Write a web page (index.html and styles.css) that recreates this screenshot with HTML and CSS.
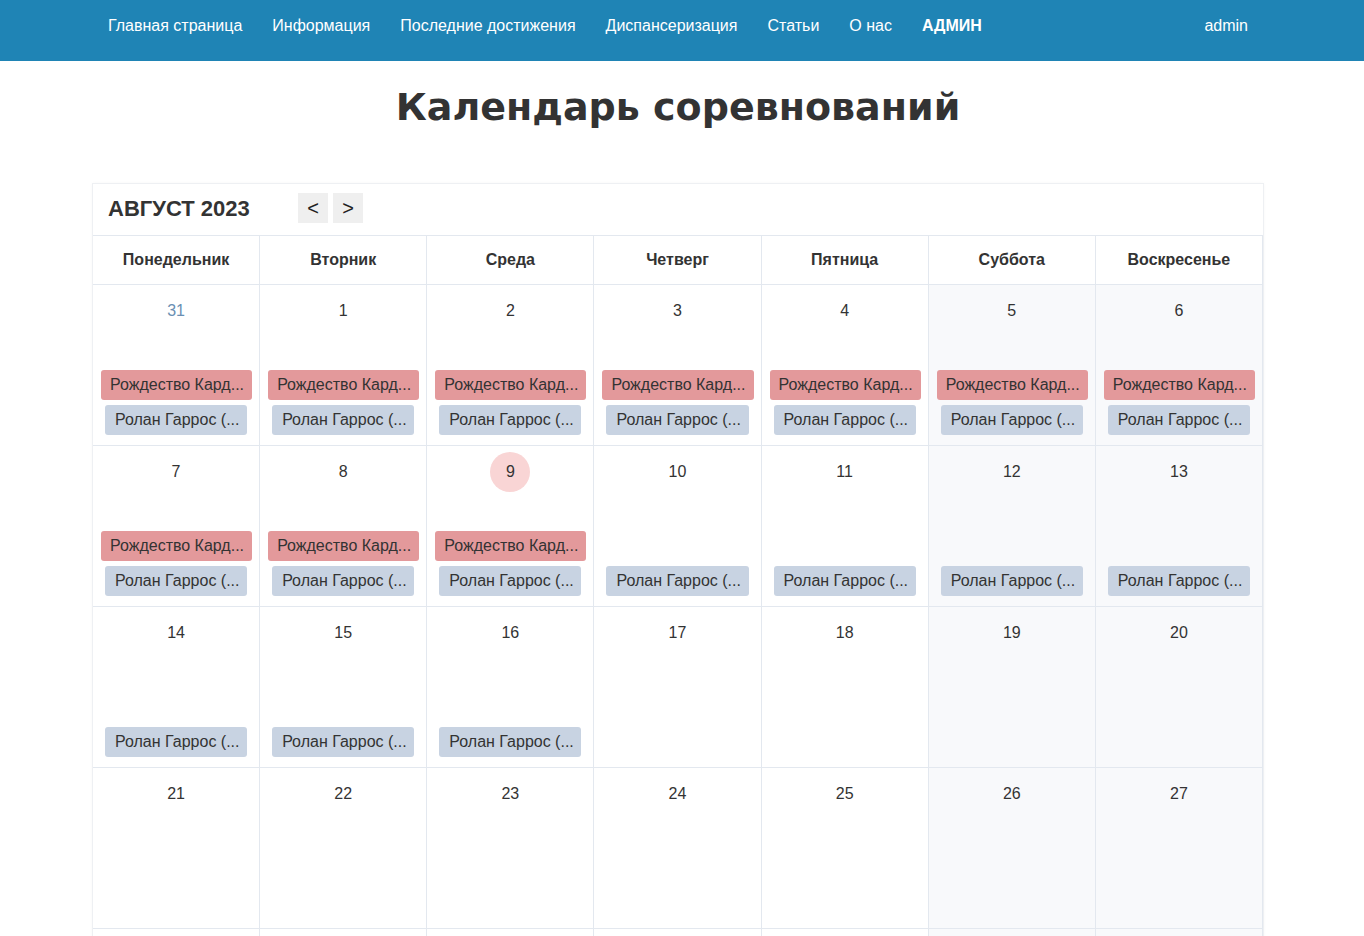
FILE: index.html
```html
<!DOCTYPE html>
<html lang="ru">
<head>
<meta charset="utf-8">
<title>Календарь соревнований</title>
<link rel="stylesheet" href="styles.css">
</head>
<body>
<nav class="navbar">
  <div class="nav-inner">
    <ul class="nav-links">
      <li><a href="#">Главная страница</a></li>
      <li><a href="#">Информация</a></li>
      <li><a href="#">Последние достижения</a></li>
      <li><a href="#">Диспансеризация</a></li>
      <li><a href="#">Статьи</a></li>
      <li><a href="#">О нас</a></li>
      <li><a href="#" class="strong">АДМИН</a></li>
    </ul>
    <a href="#" class="nav-user">admin</a>
  </div>
</nav>

<main class="page">
  <h1 class="title">Календарь соревнований</h1>

  <section class="calendar">
    <div class="cal-head">
      <h2 class="month">АВГУСТ 2023</h2>
      <div class="nav-btns">
        <button class="btn">&lt;</button>
        <button class="btn">&gt;</button>
      </div>
    </div>

    <div class="grid">
      <div class="wd">Понедельник</div>
      <div class="wd">Вторник</div>
      <div class="wd">Среда</div>
      <div class="wd">Четверг</div>
      <div class="wd">Пятница</div>
      <div class="wd">Суббота</div>
      <div class="wd">Воскресенье</div>

      <div class="day"><div class="num other">31</div><div class="ev red">Рождество Кард...</div><div class="ev gray">Ролан Гаррос (...</div></div>
      <div class="day"><div class="num">1</div><div class="ev red">Рождество Кард...</div><div class="ev gray">Ролан Гаррос (...</div></div>
      <div class="day"><div class="num">2</div><div class="ev red">Рождество Кард...</div><div class="ev gray">Ролан Гаррос (...</div></div>
      <div class="day"><div class="num">3</div><div class="ev red">Рождество Кард...</div><div class="ev gray">Ролан Гаррос (...</div></div>
      <div class="day"><div class="num">4</div><div class="ev red">Рождество Кард...</div><div class="ev gray">Ролан Гаррос (...</div></div>
      <div class="day weekend"><div class="num">5</div><div class="ev red">Рождество Кард...</div><div class="ev gray">Ролан Гаррос (...</div></div>
      <div class="day weekend"><div class="num">6</div><div class="ev red">Рождество Кард...</div><div class="ev gray">Ролан Гаррос (...</div></div>

      <div class="day"><div class="num">7</div><div class="ev red">Рождество Кард...</div><div class="ev gray">Ролан Гаррос (...</div></div>
      <div class="day"><div class="num">8</div><div class="ev red">Рождество Кард...</div><div class="ev gray">Ролан Гаррос (...</div></div>
      <div class="day"><div class="num"><span class="today">9</span></div><div class="ev red">Рождество Кард...</div><div class="ev gray">Ролан Гаррос (...</div></div>
      <div class="day"><div class="num">10</div><div class="ev gray">Ролан Гаррос (...</div></div>
      <div class="day"><div class="num">11</div><div class="ev gray">Ролан Гаррос (...</div></div>
      <div class="day weekend"><div class="num">12</div><div class="ev gray">Ролан Гаррос (...</div></div>
      <div class="day weekend"><div class="num">13</div><div class="ev gray">Ролан Гаррос (...</div></div>

      <div class="day"><div class="num">14</div><div class="ev gray">Ролан Гаррос (...</div></div>
      <div class="day"><div class="num">15</div><div class="ev gray">Ролан Гаррос (...</div></div>
      <div class="day"><div class="num">16</div><div class="ev gray">Ролан Гаррос (...</div></div>
      <div class="day"><div class="num">17</div></div>
      <div class="day"><div class="num">18</div></div>
      <div class="day weekend"><div class="num">19</div></div>
      <div class="day weekend"><div class="num">20</div></div>

      <div class="day"><div class="num">21</div></div>
      <div class="day"><div class="num">22</div></div>
      <div class="day"><div class="num">23</div></div>
      <div class="day"><div class="num">24</div></div>
      <div class="day"><div class="num">25</div></div>
      <div class="day weekend"><div class="num">26</div></div>
      <div class="day weekend"><div class="num">27</div></div>

      <div class="day"><div class="num">28</div></div>
      <div class="day"><div class="num">29</div></div>
      <div class="day"><div class="num">30</div></div>
      <div class="day"><div class="num">31</div></div>
      <div class="day"><div class="num other">1</div></div>
      <div class="day weekend"><div class="num other">2</div></div>
      <div class="day weekend"><div class="num other">3</div></div>
    </div>
  </section>
</main>
</body>
</html>
```

FILE: styles.css
```css
* { box-sizing: border-box; }

body {
  margin: 0;
  font-family: "Liberation Sans", Arial, sans-serif;
  font-size: 16px;
  color: #333;
  background: #fff;
}

.navbar {
  background: #1f84b5;
  height: 61px;
}

.nav-inner {
  width: 1170px;
  margin-left: 93px;
  display: flex;
  justify-content: space-between;
  align-items: flex-start;
}

.nav-links {
  list-style: none;
  margin: 0;
  padding: 0;
  display: flex;
}

.nav-links a,
.nav-user {
  display: block;
  padding: 16px 15px 14px;
  line-height: 20px;
  color: #fff;
  text-decoration: none;
  font-size: 16px;
}

.nav-links a.strong { font-weight: bold; }

.page {
  width: 1172px;
  margin-left: 92px;
  padding-bottom: 40px;
}

.title {
  margin: 23px 0 0;
  height: 99px;
  text-align: center;
  font-family: "DejaVu Sans", sans-serif;
  font-weight: bold;
  font-size: 38px;
  line-height: 46px;
  letter-spacing: 0;
  color: #333;
}

.calendar {
  border: 1px solid #eef0f3;
  border-bottom: none;
  box-shadow: 0 0 3px rgba(0, 0, 0, 0.03);
}

.cal-head {
  height: 52px;
  display: flex;
  align-items: center;
  padding-left: 15px;
  padding-bottom: 2px;
  border-bottom: 1px solid #e3e8ef;
}

.month {
  margin: 0;
  width: 190px;
  font-size: 22px;
  font-weight: bold;
  color: #333;
}

.nav-btns {
  display: flex;
  gap: 5px;
  margin-top: -2px;
}

.btn {
  width: 30px;
  height: 30px;
  border: none;
  background: #efefef;
  font-family: "Liberation Sans", Arial, sans-serif;
  font-size: 20px;
  color: #222;
  padding: 0;
  line-height: 26px;
}

.grid {
  display: grid;
  grid-template-columns: repeat(7, 1fr);
}

.wd {
  height: 49px;
  display: flex;
  align-items: center;
  justify-content: center;
  font-weight: bold;
  font-size: 16px;
  color: #333;
  border-right: 1px solid #e3e8ef;
  border-bottom: 1px solid #e3e8ef;
}

.day {
  height: 161px;
  display: flex;
  flex-direction: column;
  justify-content: flex-end;
  border-right: 1px solid #e3e8ef;
  border-bottom: 1px solid #e3e8ef;
  padding-bottom: 10px;
  min-width: 0;
}

.day.weekend { background: #f8f9fb; }

.num {
  margin-bottom: auto;
  padding-top: 6px;
  height: 46px;
  line-height: 40px;
  text-align: center;
  font-size: 16px;
  color: #333;
}

.num.other { color: #6a8fb3; }

.today {
  display: inline-block;
  width: 40px;
  height: 40px;
  border-radius: 50%;
  background: #f9d5d5;
}

.ev {
  height: 30px;
  line-height: 30px;
  padding: 0 9px;
  border-radius: 3px;
  font-size: 16px;
  color: #333;
  white-space: nowrap;
}

.ev.red {
  background: #e3999b;
  margin: 0 7px 5px 8px;
}

.ev.gray {
  background: #c8d3e2;
  margin: 0 12px 0 12px;
  padding: 0 10px;
}
```
